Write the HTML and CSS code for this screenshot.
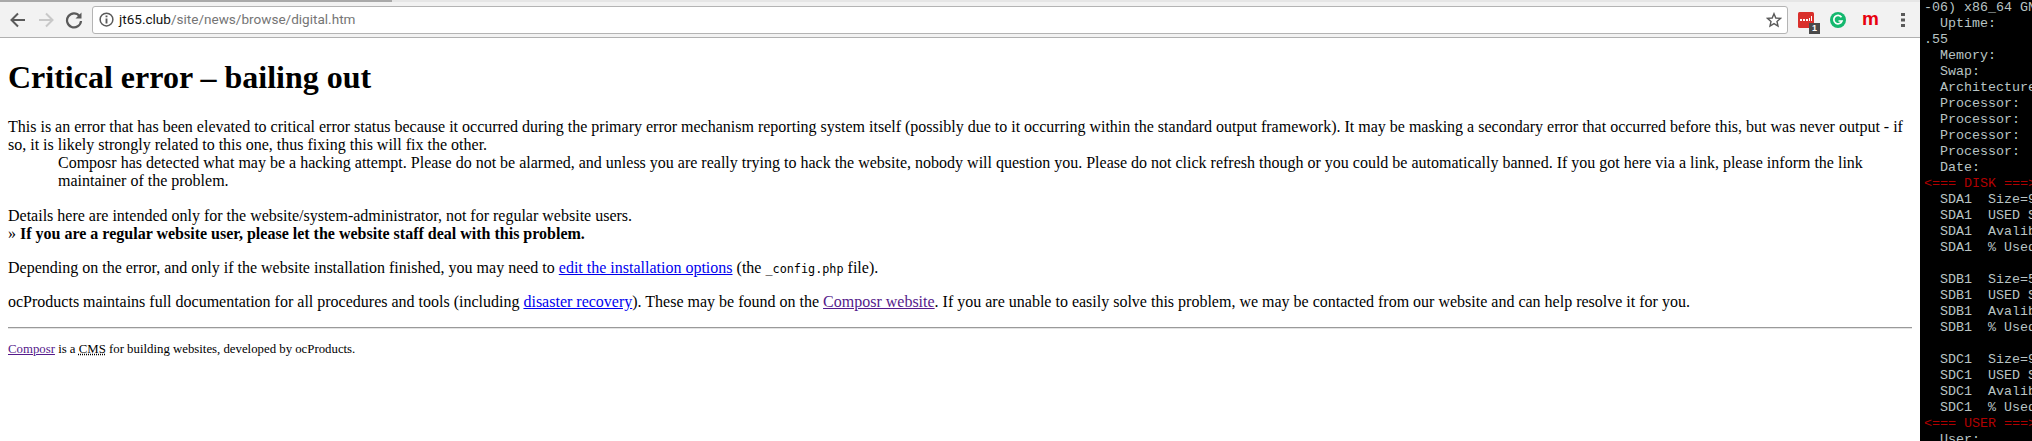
FILE: index.html
```html
<!DOCTYPE html>
<html lang="en">
<head>
<meta charset="utf-8">
<title>Critical error</title>
<link rel="stylesheet" href="styles.css">
</head>
<body>
<div class="screen">
  <div class="browser">
    <div class="tabline"></div>
    <div class="toolbar">
      <svg class="nav" width="18" height="18" viewBox="0 0 18 18"><path d="M16 9H3M9 2.500 2.500 9 9 15.500" fill="none" stroke="#5a5a5a" stroke-width="2"/></svg>
      <svg class="nav" width="18" height="18" viewBox="0 0 18 18"><path d="M2 9H15M9 2.500 15.500 9 9 15.500" fill="none" stroke="#c8c8c8" stroke-width="2"/></svg>
      <svg class="nav" width="18" height="18" viewBox="0 0 18 18"><path d="M14.500 5A7 7 0 1 0 16 10" fill="none" stroke="#5a5a5a" stroke-width="2.200"/><path d="M16.500 1.500V7.500H10.500Z" fill="#5a5a5a"/></svg>
      <div class="omnibox">
        <svg width="15" height="15" viewBox="0 0 16 16"><circle cx="8" cy="8" r="6.800" fill="none" stroke="#5a5a5a" stroke-width="1.600"/><path d="M7 3.700h2v2H7zM7 7h2v5.300H7z" fill="#5a5a5a"/></svg>
        <span class="url"><span class="host">jt65.club</span>/site/news/browse/digital.htm</span>
        <svg class="star" width="16" height="16" viewBox="0 0 16 16"><path d="M8 1.700 9.800 6 14.500 6.400 11 9.400 12 14 8 11.600 4 14 5 9.400 1.500 6.400 6.200 6Z" fill="none" stroke="#5a5a5a" stroke-width="1.400"/></svg>
      </div>
      <div class="extensions">
        <div class="ext"><svg width="16" height="16" viewBox="0 0 16 16"><rect width="16" height="16" rx="1.500" fill="#d9302c"/><path d="M2 7h2v2H2zM5 7h2v2H5zM8 7h2v2H8zM11 6h1v3h-1zM13 4h1v5h-1z" fill="#fff"/></svg><span class="badge">1</span></div>
        <div class="ext"><svg width="16" height="16" viewBox="0 0 16 16"><circle cx="8" cy="8" r="8" fill="#14b86e"/><path d="M11.500 5.200A4.200 4.200 0 1 0 12 9H8.500" fill="none" stroke="#fff" stroke-width="1.700"/></svg></div>
        <div class="ext ext-m">m</div>
        <svg class="menu" width="4" height="14" viewBox="0 0 4 14"><path d="M0 0h4v3H0zM0 5.500h4v3H0zM0 11h4v3H0z" fill="#5a5a5a"/></svg>
      </div>
    </div>
    <main class="page">
      <h1>Critical error – bailing out</h1>
      <p>This is an error that has been elevated to critical error status because it occurred during the primary error mechanism reporting system itself (possibly due to it occurring within the standard output framework). It may be masking a secondary error that occurred before this, but was never output - if so, it is likely strongly related to this one, thus fixing this will fix the other.</p>
      <div class="indent">Composr has detected what may be a hacking attempt. Please do not be alarmed, and unless you are really trying to hack the website, nobody will question you. Please do not click refresh though or you could be automatically banned. If you got here via a link, please inform the link maintainer of the problem.</div>
      <p class="details">Details here are intended only for the website/system-administrator, not for regular website users.<br>» <strong>If you are a regular website user, please let the website staff deal with this problem.</strong></p>
      <p>Depending on the error, and only if the website installation finished, you may need to <a href="#">edit the installation options</a> (the <code>_config.php</code> file).</p>
      <p>ocProducts maintains full documentation for all procedures and tools (including <a href="#">disaster recovery</a>). These may be found on the <a href="#" class="visited">Composr website</a>. If you are unable to easily solve this problem, we may be contacted from our website and can help resolve it for you.</p>
      <hr>
      <p class="foot"><a href="#" class="visited">Composr</a> is a <abbr>CMS</abbr> for building websites, developed by ocProducts.</p>
    </main>
  </div>
  <pre class="terminal">-06) x86_64 GNU
  Uptime:
.55
  Memory:
  Swap:
  Architecture:
  Processor:
  Processor:
  Processor:
  Processor:
  Date:
<span class="red">&lt;=== DISK ===&gt;</span>
  SDA1  Size=9
  SDA1  USED S
  SDA1  Avalib
  SDA1  % Used

  SDB1  Size=5
  SDB1  USED S
  SDB1  Avalib
  SDB1  % Used

  SDC1  Size=9
  SDC1  USED S
  SDC1  Avalib
  SDC1  % Used
<span class="red">&lt;=== USER ===&gt;</span>
  User:</pre>
</div>
</body>
</html>
```
FILE: styles.css
```css
* { box-sizing: border-box; }
html, body { margin: 0; height: 100%; overflow: hidden; background: #fff; }
.screen { display: flex; width: 2032px; height: 441px; overflow: hidden; }
.browser { width: 1920px; flex: none; display: flex; flex-direction: column; }
.tabline { height: 2px; flex: none; background: linear-gradient(to right, #a9a9a9 392px, #e6e6e6 392px); }
.toolbar { height: 36px; flex: none; background: #f2f2f2; border-bottom: 1px solid #b0b0b0; display: flex; align-items: center; padding-left: 9px; gap: 10px; }
.nav { flex: none; }
.omnibox { width: 1696px; height: 28px; flex: none; margin-left: -1px; background: #fff; border: 1px solid #b4b4b4; border-radius: 3px; display: flex; align-items: center; padding: 0 5px 0 6px; gap: 5px; }
.url { font: 13.55px/1 Roboto, "Liberation Sans", sans-serif; color: #757575; flex: 1; white-space: nowrap; }
.host { color: #111; }
.extensions { display: flex; align-items: center; gap: 16px; }
.ext { position: relative; width: 16px; height: 16px; flex: none; }
.ext svg { display: block; }
.ext-m { font: bold 19px/14px "Liberation Sans", sans-serif; color: #e8000f; text-align: center; }
.badge { position: absolute; right: -6px; bottom: -6px; width: 11px; height: 11px; background: #4a4a4a; color: #fff; font: bold 9px/11px "Liberation Sans", sans-serif; text-align: center; }
.menu { margin-left: 7px; flex: none; }
.page { padding: 0 8px; font: 16px/18px "Liberation Serif", "Times New Roman", serif; color: #000; }
h1 { font-size: 32px; line-height: 37px; margin: 21px 0 22px; font-weight: bold; }
p { margin: 16px 0; }
.indent { margin: -16px 0 0 50px; }
.details { margin-top: 17px; }
a { color: #00e; }
a.visited { color: #551a8b; }
code { font: 11.8px "DejaVu Sans Mono", monospace; }
hr { margin: 15px 0 8px; border: 0; border-top: 1px solid #9a9a9a; border-bottom: 1px solid #e4e4e4; }
.foot { font-size: 12.8px; line-height: 14px; margin-top: 13px; }
abbr { text-decoration: underline dotted; }
.terminal { width: 112px; flex: none; margin: 0; padding: 0 0 0 4px; background: #000; color: #b9c4c4; font: 13.33px/16px "Liberation Mono", "Courier New", monospace; overflow: hidden; }
.red { color: #b00000; }
```
